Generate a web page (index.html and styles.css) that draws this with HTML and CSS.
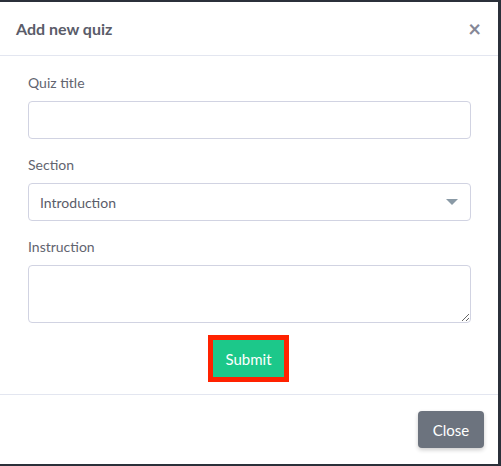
FILE: index.html
```html
<!DOCTYPE html>
<html>
<head>
<meta charset="utf-8">
<link rel="stylesheet" href="styles.css">
</head>
<body>
<div class="modal">
  <div class="modal-header">
    <h5 class="modal-title">Add new quiz</h5>
    <span class="close">&times;</span>
  </div>
  <div class="modal-body">
    <div class="group">
      <label class="label">Quiz title</label>
      <input class="control" type="text">
    </div>
    <div class="group">
      <label class="label">Section</label>
      <div class="select">
        <span>Introduction</span>
        <span class="caret"></span>
      </div>
    </div>
    <div class="group last">
      <label class="label">Instruction</label>
      <textarea class="control area"></textarea>
    </div>
    <div class="actions">
      <button class="btn submit">Submit</button>
    </div>
  </div>
  <div class="modal-footer">
    <button class="btn close-btn">Close</button>
  </div>
</div>
</body>
</html>
```
FILE: styles.css
```css
* { box-sizing: border-box; }
html, body { margin: 0; padding: 0; }
body {
  background: #2b303a;
  font-family: Lato, "Open Sans", sans-serif;
  width: 501px;
  height: 466px;
  overflow: hidden;
}
.modal {
  margin-top: 2px;
  width: 498px;
  height: 462px;
  background: #fff;
  display: flex;
  flex-direction: column;
}
.modal-header {
  height: 54px;
  border-bottom: 1px solid #e3e6f0;
  display: flex;
  align-items: center;
  justify-content: space-between;
  padding: 0 17px 0 16px;
}
.modal-title {
  margin: 0;
  font-size: 16px;
  font-weight: 700;
  color: #5a5c69;
}
.close {
  font-size: 22px;
  font-weight: 700;
  color: #858796;
  line-height: 1;
}
.modal-body {
  padding: 16px 27px 17px 28px;
  border-bottom: 1px solid #e3e6f0;
}
.group { display: flex; flex-direction: column; margin-bottom: 15px; }
.group.last { margin-bottom: 17px; }
.label {
  font-size: 14px;
  line-height: 21px;
  color: #62646f;
  margin-bottom: 8px;
}
.control {
  height: 38px;
  border: 1px solid #d1d3e2;
  border-radius: 4px;
  width: 100%;
  font: inherit;
  display: block;
}
.area { height: 58px; resize: vertical; }
.select {
  height: 38px;
  border: 1px solid #d1d3e2;
  border-radius: 4px;
  display: flex;
  align-items: center;
  justify-content: space-between;
  padding: 0 12px 0 11px;
  font-size: 14px;
  color: #5a5c69;
}
.caret {
  width: 0; height: 0;
  border-left: 6px solid transparent;
  border-right: 6px solid transparent;
  border-top: 6px solid #8a9aa6;
}
.actions { display: flex; justify-content: center; padding-right: 2px; }
.btn {
  font-family: inherit;
  font-size: 14px;
  border: none;
  border-radius: 4px;
  color: #fff;
  height: 37px;
}
.submit {
  width: 71px;
  background: #1cc88a;
  border-radius: 0;
  font-size: 15px;
  outline: 5px solid #ff2200;
}
.modal-footer {
  flex: 1;
  display: flex;
  justify-content: flex-end;
  align-items: flex-start;
  padding: 16px 14px 0 0;
}
.close-btn {
  width: 66px;
  background: #6c737e;
  font-size: 15px;
  box-shadow: 0 2px 4px rgba(0,0,0,0.2);
}
```
